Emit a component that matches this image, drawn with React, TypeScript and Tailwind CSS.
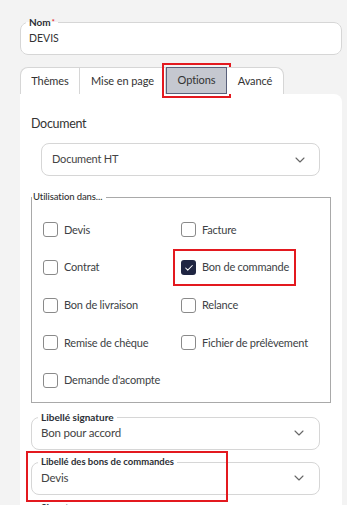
import { ChevronDown, Check } from "lucide-react"

const font = { fontFamily: "Lato, 'Noto Sans', sans-serif" }

const usages = [
  { label: "Devis", checked: false },
  { label: "Facture", checked: false },
  { label: "Contrat", checked: false },
  { label: "Bon de commande", checked: true, highlight: true },
  { label: "Bon de livraison", checked: false },
  { label: "Relance", checked: false },
  { label: "Remise de chèque", checked: false },
  { label: "Fichier de prélèvement", checked: false },
  { label: "Demande d'acompte", checked: false },
]

function Checkbox({ label, checked, highlight }: { label: string; checked: boolean; highlight?: boolean }) {
  return (
    <label className="relative flex items-center gap-[6px] h-[37.7px]">
      {highlight && <span className="absolute left-[-8px] w-[123px] top-[0px] h-[37px] border-2 border-[#e3191f]" />}
      <span
        className={
          checked
            ? "flex items-center justify-center w-[15px] h-[15px] rounded-[3px] bg-[#1f2542]"
            : "w-[15px] h-[15px] rounded-[3px] border border-[#8a8a8a] bg-white"
        }
      >
        {checked && <Check className="w-[10px] h-[10px] text-white" strokeWidth={2.5} />}
      </span>
      <span className="text-[11px] tracking-[-0.2px] text-[#3d3f45]">{label}</span>
    </label>
  )
}

function OutlinedSelect({ label, value, small }: { label: string; value: string; small?: boolean }) {
  return (
    <fieldset className="border border-[#d6d6d6] rounded-lg pl-[9px] pr-[12px] pb-[7px] w-[289px]">
      <legend
        className={
          small
            ? "ml-[-3px] px-[3px] text-[9.5px] leading-[12px] font-bold text-[#2c2f36]"
            : "ml-[-3px] px-[3px] text-[10px] leading-[12px] font-bold text-[#2c2f36]"
        }
      >
        {label}
      </legend>
      <div className="flex items-center justify-between pt-[1px]">
        <span className="text-[11.5px] tracking-[-0.2px] leading-[18px] text-[#444]">{value}</span>
        <ChevronDown className="w-[16px] h-[16px] text-[#666]" strokeWidth={1.6} />
      </div>
    </fieldset>
  )
}

export default function App() {
  return (
    <div className="min-h-[505px] bg-[#f3f3f3] pl-[20px] pr-[5px] pt-[16px]" style={font}>
      <fieldset className="bg-white rounded-lg border border-[#d6d6d6] w-[322px] pl-[8px] pb-[8px]">
        <legend className="ml-[-3px] px-[3px] text-[10px] leading-[12px] font-bold text-[#2c2f36]">
          Nom<span className="text-[#e3191f] align-top text-[7px] ml-[1px]">*</span>
        </legend>
        <div className="pt-[2px] text-[10.5px] leading-[16px] text-[#333]">DEVIS</div>
      </fieldset>

      <div className="flex mt-[12px] h-[27px] text-[11px] tracking-[-0.1px] text-[#333]">
        <button className="w-[60px] bg-white border border-[#d6d6d6] border-b-0 rounded-tl-lg">Thèmes</button>
        <button className="w-[86px] bg-white border-t border-r border-[#d6d6d6]">Mise en page</button>
        <button className="w-[61px] bg-[#c5c8d0] border border-[#59607a] outline-2 outline-[#e3191f] outline-offset-[2px]">
          Options
        </button>
        <button className="w-[57px] bg-white border border-l-0 border-b-0 border-[#d6d6d6] rounded-tr-lg">Avancé</button>
      </div>

      <div className="bg-white w-[322px] rounded-tr-lg pl-[11px] pt-[20px] pb-[20px]">
        <div className="text-[12.5px] tracking-[-0.3px] leading-[20px] text-[#333]">Document</div>
        <div className="ml-[10px] mt-[9px] w-[279px] h-[33px] border border-[#d6d6d6] rounded-lg flex items-center justify-between pl-[10px] pr-[11px]">
          <span className="text-[11px] tracking-[-0.2px] text-[#444]">Document HT</span>
          <ChevronDown className="w-[16px] h-[16px] text-[#666]" strokeWidth={1.6} />
        </div>

        <fieldset className="mt-[14px] w-[300px] border border-[#a9a9a9] pl-[11px] pb-[3px] pt-[7px]">
          <legend className="ml-[-11px] pl-[1px] pr-[4px] text-[9.5px] tracking-[-0.1px] leading-[14px] font-medium text-[#333]">
            Utilisation dans...
          </legend>
          <div className="grid grid-cols-[138px_1fr]">
            {usages.map((u) => (
              <Checkbox key={u.label} label={u.label} checked={u.checked} highlight={u.highlight} />
            ))}
          </div>
        </fieldset>

        <div className="mt-[8px]">
          <OutlinedSelect label="Libellé signature" value="Bon pour accord" />
        </div>
        <div className="relative mt-[6px]">
          <span className="absolute left-[-5px] top-[-5px] w-[202px] h-[51px] border-2 border-[#e3191f]" />
          <OutlinedSelect label="Libellé des bons de commandes" value="Devis" small />
        </div>
        <div className="mt-[6px]">
          <OutlinedSelect label="Signature" value="Sans" />
        </div>
      </div>
    </div>
  )
}
